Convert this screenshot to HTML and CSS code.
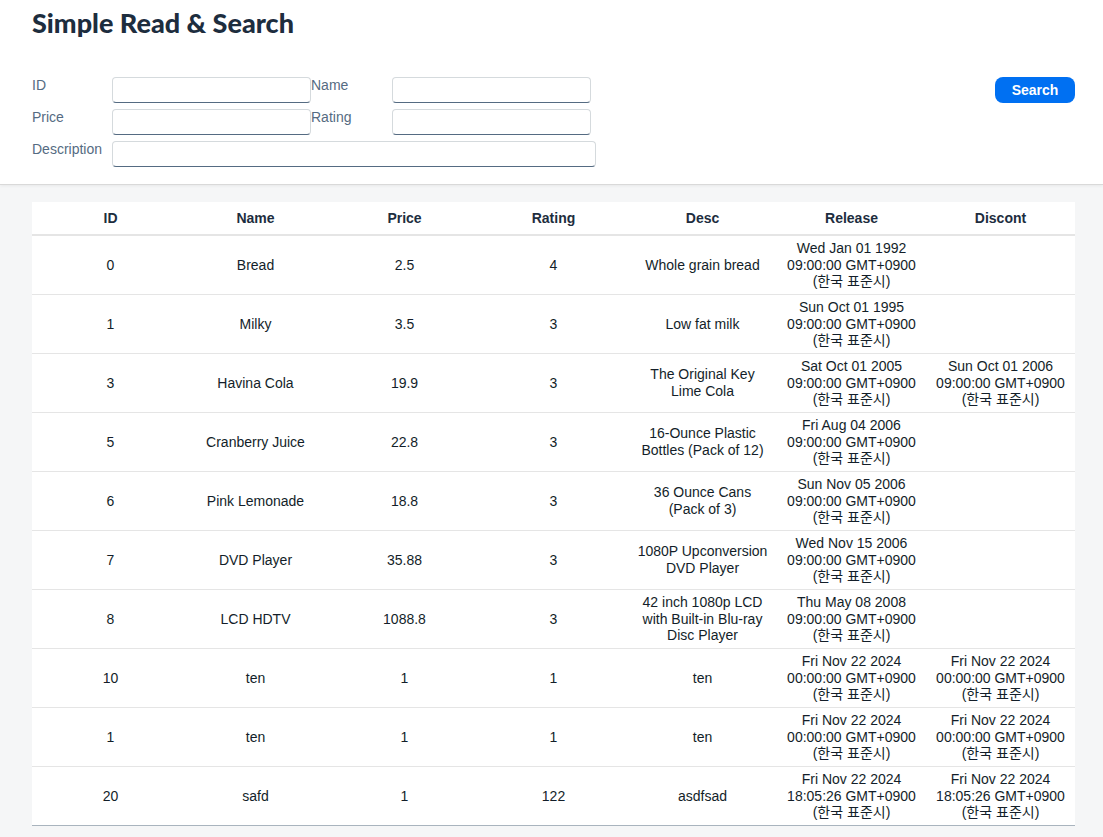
FILE: index.html
```html
<!DOCTYPE html>
<html lang="en">
<head>
<meta charset="utf-8">
<title>Simple Read &amp; Search</title>
<link rel="stylesheet" href="styles.css">
</head>
<body>
<header class="page-header">
  <h1 class="title">Simple Read &amp; Search</h1>
  <div class="filter-bar">
    <div class="filter-grid">
      <label class="f-label" for="f-id">ID</label>
      <input class="f-input" id="f-id" type="text">
      <label class="f-label" for="f-name">Name</label>
      <input class="f-input" id="f-name" type="text">
      <label class="f-label" for="f-price">Price</label>
      <input class="f-input" id="f-price" type="text">
      <label class="f-label" for="f-rating">Rating</label>
      <input class="f-input" id="f-rating" type="text">
      <label class="f-label" for="f-desc">Description</label>
      <input class="f-input f-wide" id="f-desc" type="text">
    </div>
    <button class="search-btn" type="button">Search</button>
  </div>
</header>
<main class="content">
  <div class="table-card">
    <table class="data-table">
      <thead>
        <tr><th>ID</th><th>Name</th><th>Price</th><th>Rating</th><th>Desc</th><th>Release</th><th>Discont</th></tr>
      </thead>
      <tbody>
        <tr><td>0</td><td>Bread</td><td>2.5</td><td>4</td><td>Whole grain bread</td><td>Wed Jan 01 1992 09:00:00 GMT+0900 (한국 표준시)</td><td></td></tr>
        <tr><td>1</td><td>Milky</td><td>3.5</td><td>3</td><td>Low fat milk</td><td>Sun Oct 01 1995 09:00:00 GMT+0900 (한국 표준시)</td><td></td></tr>
        <tr><td>3</td><td>Havina Cola</td><td>19.9</td><td>3</td><td>The Original Key Lime Cola</td><td>Sat Oct 01 2005 09:00:00 GMT+0900 (한국 표준시)</td><td>Sun Oct 01 2006 09:00:00 GMT+0900 (한국 표준시)</td></tr>
        <tr><td>5</td><td>Cranberry Juice</td><td>22.8</td><td>3</td><td>16-Ounce Plastic Bottles (Pack of 12)</td><td>Fri Aug 04 2006 09:00:00 GMT+0900 (한국 표준시)</td><td></td></tr>
        <tr><td>6</td><td>Pink Lemonade</td><td>18.8</td><td>3</td><td>36 Ounce Cans (Pack of 3)</td><td>Sun Nov 05 2006 09:00:00 GMT+0900 (한국 표준시)</td><td></td></tr>
        <tr><td>7</td><td>DVD Player</td><td>35.88</td><td>3</td><td>1080P Upconversion DVD Player</td><td>Wed Nov 15 2006 09:00:00 GMT+0900 (한국 표준시)</td><td></td></tr>
        <tr><td>8</td><td>LCD HDTV</td><td>1088.8</td><td>3</td><td>42 inch 1080p LCD with Built-in Blu-ray Disc Player</td><td>Thu May 08 2008 09:00:00 GMT+0900 (한국 표준시)</td><td></td></tr>
        <tr><td>10</td><td>ten</td><td>1</td><td>1</td><td>ten</td><td>Fri Nov 22 2024 00:00:00 GMT+0900 (한국 표준시)</td><td>Fri Nov 22 2024 00:00:00 GMT+0900 (한국 표준시)</td></tr>
        <tr><td>1</td><td>ten</td><td>1</td><td>1</td><td>ten</td><td>Fri Nov 22 2024 00:00:00 GMT+0900 (한국 표준시)</td><td>Fri Nov 22 2024 00:00:00 GMT+0900 (한국 표준시)</td></tr>
        <tr><td>20</td><td>safd</td><td>1</td><td>122</td><td>asdfsad</td><td>Fri Nov 22 2024 18:05:26 GMT+0900 (한국 표준시)</td><td>Fri Nov 22 2024 18:05:26 GMT+0900 (한국 표준시)</td></tr>
      </tbody>
    </table>
  </div>
</main>
</body>
</html>
```
FILE: styles.css
```css
* { box-sizing: border-box; }

html, body {
  margin: 0;
  padding: 0;
  background: #f5f6f7;
  font-family: "Liberation Sans", "Noto Sans CJK KR", Arial, sans-serif;
  font-size: 14px;
  color: #131e29;
}

.page-header {
  background: #ffffff;
  padding: 7px 28px 17px 32px;
  box-shadow: 0 1px 0 #d9d9d9, 0 2px 3px rgba(0, 0, 0, 0.06);
  position: relative;
}

.title {
  margin: 0;
  font-family: "Lato", "Liberation Sans", sans-serif;
  font-size: 27px;
  line-height: 32px;
  font-weight: 900;
  color: #1d2d3e;
}

.filter-bar {
  margin-top: 38px;
  display: flex;
  justify-content: space-between;
  align-items: flex-start;
}

.filter-grid {
  display: grid;
  grid-template-columns: 80px 199px 81px 199px;
  row-gap: 6px;
}

.f-label {
  color: #556b82;
  font-size: 14px;
  line-height: 17px;
  align-self: start;
}

.f-input {
  height: 26px;
  width: 100%;
  margin: 0;
  border: 1px solid #d5dadd;
  border-bottom-color: #556b82;
  border-radius: 4px;
  background: #ffffff;
  font: inherit;
  padding: 0 8px;
  outline: none;
}

.f-wide {
  grid-column: 2 / span 3;
  width: 484px;
}

.search-btn {
  width: 80px;
  height: 26px;
  border: none;
  border-radius: 8px;
  background: #0070f2;
  color: #ffffff;
  font-family: inherit;
  font-size: 14px;
  font-weight: 700;
  padding: 0;
  cursor: pointer;
}

.content {
  padding: 18px 28px 0 32px;
}

.table-card {
  background: #ffffff;
}

.data-table {
  width: 100%;
  table-layout: fixed;
  border-collapse: collapse;
}

.data-table th {
  height: 33px;
  padding: 0 8px;
  font-weight: 700;
  color: #1d2d3e;
  text-align: center;
  border-bottom: 2px solid #e5e5e5;
}

.data-table td {
  padding: 4px 8px 4.5px;
  line-height: 16.5px;
  text-align: center;
  vertical-align: middle;
  border-bottom: 1px solid #e5e5e5;
  color: #131e29;
}

.data-table th:first-child,
.data-table td:first-child {
  padding-left: 16px;
}

.data-table tbody tr:last-child td {
  border-bottom-color: #a9b4be;
}
```
